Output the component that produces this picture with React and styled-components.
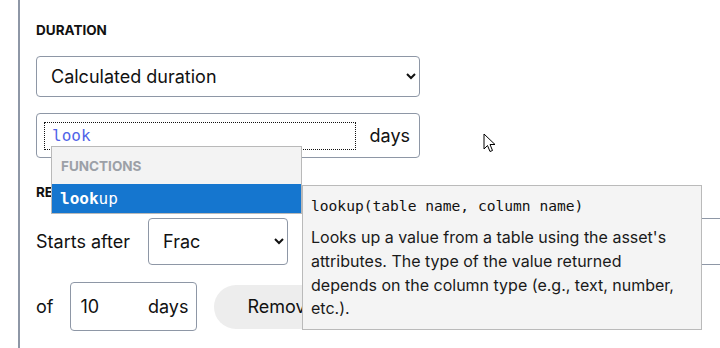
import React from "react";
import styled, { createGlobalStyle } from "styled-components";

const Global = createGlobalStyle`
  html, body { margin: 0; padding: 0; background: #fff; overflow: hidden; }
  body { font-family: Inter, "Noto Sans", sans-serif; color: #1a1a1a; }
  * { box-sizing: border-box; }
`;

const Page = styled.div`
  position: relative;
  width: 720px;
  height: 348px;
  padding-left: 18px;
`;

const Panel = styled.div`
  border-left: 2px solid #8e97a6;
  height: 100%;
  padding: 22px 0 0 16px;
  display: flex;
  flex-direction: column;
`;

const SectionLabel = styled.div`
  font-size: 13.5px;
  line-height: 16px;
  font-weight: 700;
  color: #111;
  white-space: nowrap;
  margin-top: ${(p) => p.$mt || 0}px;
`;

const Select = styled.select`
  font-family: Inter, "Noto Sans", sans-serif;
  font-size: 18px;
  color: #111;
  background: #fff;
  border: 1px solid #8e97a6;
  border-radius: 4px;
  height: ${(p) => p.$h}px;
  width: ${(p) => p.$w}px;
  padding: 0 6px 0 10px;
  margin-top: ${(p) => p.$mt || 0}px;
  flex: none;
`;

const FieldWrap = styled.div`
  position: relative;
  margin-top: 16px;
  width: 384px;
`;

const FieldBox = styled.div`
  height: 45px;
  border: 1px solid #8e97a6;
  border-radius: 4px;
  display: flex;
  align-items: center;
  padding: 0 9px 0 7px;
  background: #fff;
`;

const Editor = styled.div`
  width: 312px;
  height: 28px;
  border: 1px dotted #111;
  padding-left: 7px;
  font-family: "DejaVu Sans Mono", monospace;
  font-size: 16px;
  line-height: 25px;
  color: #4f63e8;
`;

const Suffix = styled.span`
  margin-left: auto;
  font-size: 18px;
  color: #111;
`;

const Dropdown = styled.div`
  position: absolute;
  left: 15px;
  top: 33px;
  width: 251px;
  border: 1px solid #b9b9b9;
  background: #f3f3f3;
  z-index: 2;
`;

const DropHeader = styled.div`
  height: 37px;
  padding-left: 9px;
  display: flex;
  align-items: center;
  font-size: 13.5px;
  font-weight: 700;
  color: #9ca0a7;
`;

const DropItem = styled.div`
  height: 29px;
  background: #1576cf;
  color: #fff;
  padding-left: 8px;
  display: flex;
  align-items: center;
  font-family: "DejaVu Sans Mono", monospace;
  font-size: 16px;
  b { font-weight: 700; }
`;

const Tooltip = styled.div`
  position: absolute;
  left: 266px;
  top: 72px;
  width: 400px;
  height: 145px;
  background: #f4f4f4;
  border: 1px solid #bababa;
  padding: 10px 4px 0 8px;
  z-index: 3;
`;

const Signature = styled.div`
  font-family: "DejaVu Sans Mono", monospace;
  font-size: 14.6px;
  line-height: 20px;
  color: #111;
`;

const Desc = styled.div`
  margin-top: 10px;
  font-size: 16px;
  line-height: 23.8px;
  color: #1a1a1a;
`;

const Row = styled.div`
  display: flex;
  align-items: center;
  margin-top: ${(p) => p.$mt}px;
  gap: ${(p) => p.$gap}px;
`;

const RowLabel = styled.span`
  font-size: 18px;
  color: #111;
  white-space: nowrap;
  flex: none;
`;

const HiddenBox = styled.div`
  width: 440px;
  height: 47px;
  flex: none;
  border: 1px solid #8e97a6;
  border-radius: 4px;
`;

const NumBox = styled.div`
  width: 127px;
  height: 49px;
  flex: none;
  border: 1px solid #8e97a6;
  border-radius: 4px;
  display: flex;
  align-items: center;
  padding: 0 8px 0 9px;
  font-size: 18px;
  color: #111;
  span { margin-left: auto; }
`;

const PillButton = styled.button`
  height: 44px;
  padding: 0 33px;
  border: none;
  border-radius: 22px;
  background: #ededed;
  font-family: Inter, "Noto Sans", sans-serif;
  font-size: 18px;
  color: #111;
  flex: none;
`;

const Cursor = styled.svg`
  position: absolute;
  left: 483px;
  top: 133px;
  z-index: 5;
`;

export default function App() {
  return (
    <Page>
      <Global />
      <Panel>
        <SectionLabel>DURATION</SectionLabel>
        <Select $w={384} $h={41} $mt={18} defaultValue="calc">
          <option value="calc">Calculated duration</option>
        </Select>
        <FieldWrap>
          <FieldBox>
            <Editor>look</Editor>
            <Suffix>days</Suffix>
          </FieldBox>
          <Dropdown>
            <DropHeader>FUNCTIONS</DropHeader>
            <DropItem>
              <span>
                <b>look</b>up
              </span>
            </DropItem>
          </Dropdown>
          <Tooltip>
            <Signature>lookup(table name, column name)</Signature>
            <Desc>
              Looks up a value from a table using the asset's attributes. The
              type of the value returned
              <br />
              depends on the column type (e.g., text, number, etc.).
            </Desc>
          </Tooltip>
        </FieldWrap>
        <SectionLabel $mt={26}>RECURRENCE</SectionLabel>
        <Row $mt={18} $gap={18}>
          <RowLabel>Starts after</RowLabel>
          <Select $w={140} $h={47} defaultValue="frac">
            <option value="frac">Frac</option>
          </Select>
          <HiddenBox />
        </Row>
        <Row $mt={17} $gap={17}>
          <RowLabel>of</RowLabel>
          <NumBox>
            10<span>days</span>
          </NumBox>
          <PillButton>Remove</PillButton>
        </Row>
      </Panel>
      <Cursor width="14" height="21" viewBox="0 0 14 21">
        <path
          d="M1 1 L1 16 L4.5 12.5 L7 18.5 L9.5 17.5 L7 11.5 L12 11.5 Z"
          fill="#fff"
          stroke="#000"
          strokeWidth="1"
          strokeLinejoin="round"
        />
      </Cursor>
    </Page>
  );
}
